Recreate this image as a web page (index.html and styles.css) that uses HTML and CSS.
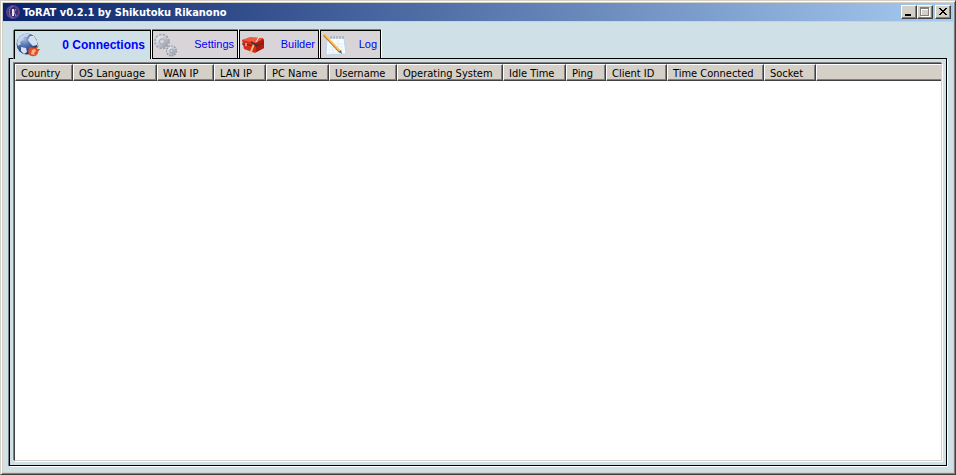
FILE: index.html
```html
<!DOCTYPE html>
<html lang="en">
<head>
<meta charset="utf-8">
<title>ToRAT v0.2.1 by Shikutoku Rikanono</title>
<link rel="stylesheet" href="styles.css">
</head>
<body>
<div class="window">
  <header class="titlebar">
    <svg class="app-icon" viewBox="0 0 16 16" aria-hidden="true">
      <circle cx="8" cy="8" r="7" fill="#57418f"/>
      <circle cx="8" cy="8" r="5" fill="#3d2d70"/>
      <path d="M8 2C3 4 3 12 8 14" fill="none" stroke="#8a78bc"/>
      <path d="M7 5h2v7H7z" fill="#e8e4f4"/>
      <path d="M11 5L9 8l2 4" fill="none" stroke="#a398c4"/>
    </svg>
    <h1 class="title">ToRAT v0.2.1 by Shikutoku Rikanono</h1>
    <div class="controls">
      <button class="control" type="button" aria-label="Minimize"><svg viewBox="0 0 12 10" shape-rendering="crispEdges"><path d="M2 7h6v2H2z"/></svg></button>
      <button class="control" type="button" aria-label="Maximize" disabled><svg viewBox="0 0 12 10" shape-rendering="crispEdges"><path d="M2 1h9v9H2zM3 3v6h7V3z" fill="#fff" fill-rule="evenodd"/><path d="M1 0h9v9H1zM2 2v6h7V2z" fill="#808080" fill-rule="evenodd"/></svg></button>
      <button class="control close" type="button" aria-label="Close"><svg viewBox="0 0 12 10" shape-rendering="crispEdges"><path d="M2 1h2v1h1v1h2V2h1V1h2v1H9v1H8v1H7v1h1v1h1v1h1v1H8V7H7V6H5v1H4v1H2V7h1V6h1V5h1V4H4V3H3V2H2z"/></svg></button>
    </div>
  </header>
  <main class="client">
    <div class="tabs" role="tablist">
      <button class="tab active" type="button" role="tab" aria-selected="true">
        <svg viewBox="0 0 24 24" aria-hidden="true">
          <defs><radialGradient id="sea" cx=".35" cy=".25" r=".8"><stop offset="0" stop-color="#a9c0e6"/><stop offset=".45" stop-color="#4d6ea9"/><stop offset="1" stop-color="#142c60"/></radialGradient></defs>
          <circle cx="11" cy="11" r="10.5" fill="url(#sea)"/>
          <path d="M2 6C5 1 10 0 14 1l-3 3-3 0-1 3-3 2 1 2-3 2-1-3z" fill="#c5d4ec"/>
          <path d="M14 3l4 0 3 5 0 4-4 1-3-3-2-3zM5 14l5 1 1 4-3 2-3-3z" fill="#d4dff0"/>
          <path d="M14 14c2 1 3 0 5 1l4-3-2 4 3 0-2 3c0 3-3 5-6 4-4 0-5-5-2-9z" fill="#dd5128"/>
          <path d="M16 17l3-1 1 2-2 2 1 2-4-1z" fill="#ffb38c"/>
        </svg>
        <span>0 Connections</span>
      </button>
      <button class="tab settings" type="button" role="tab" aria-selected="false">
        <svg viewBox="0 0 24 24" aria-hidden="true">
          <defs><linearGradient id="steel" x2="1" y2="1"><stop offset="0" stop-color="#e6e9ef"/><stop offset="1" stop-color="#9da2ae"/></linearGradient></defs>
          <g fill="none">
            <circle cx="8" cy="8.5" r="6.5" stroke="#9da2ad" stroke-width="2.6" stroke-dasharray="2.1 1.3"/>
            <circle cx="8" cy="8.5" r="4.5" stroke="url(#steel)" stroke-width="3.6"/>
            <circle cx="8" cy="8.5" r="2.6" stroke="#9096a3" stroke-width=".7"/>
            <circle cx="17.5" cy="18" r="4.6" stroke="#8f95a2" stroke-width="2" stroke-dasharray="1.6 1"/>
            <circle cx="17.5" cy="18" r="3.1" stroke="url(#steel)" stroke-width="2.6"/>
            <circle cx="17.5" cy="18" r="1.7" stroke="#858c99" stroke-width=".7"/>
          </g>
        </svg>
        <span>Settings</span>
      </button>
      <button class="tab builder" type="button" role="tab" aria-selected="false">
        <svg viewBox="0 0 24 24" aria-hidden="true">
          <path d="M1 7l8-2 13 0 1 10-9 5-11-4z" fill="#d42d1b"/>
          <path d="M1 7l8-3 13 1-7 5z" fill="#ed5c40"/>
          <path d="M15 10l8-4 0 9-8 4z" fill="#a91d12"/>
          <path d="M1 11l14 2 8-3" fill="none" stroke="#851a10"/>
          <path d="M13 11L9 21" stroke="#efc379" stroke-width="2"/>
          <path d="M10 8l7 4-1 2-6-4z" fill="#433"/>
          <path d="M15 9l3-5" stroke="#eee"/>
          <path d="M5 10v3" stroke="#fff"/>
        </svg>
        <span>Builder</span>
      </button>
      <button class="tab log" type="button" role="tab" aria-selected="false">
        <svg viewBox="0 0 24 24" aria-hidden="true">
          <path d="M5 5l17 0 2 16-20 1z" fill="#f8fcff" stroke="#b9d4e5"/>
          <path d="M7 11h14M7 14h14M6 17h16M6 20h16M11 7v14M16 7v14" stroke="#deedf6"/>
          <path d="M9 3v3m3-3v3m3-3v3m3-3v3m3-3v3" stroke="#999fa7"/>
          <path d="M2 2l16 17" stroke="#b7762a" stroke-width="2.4"/>
          <path d="M2 1l16 17" stroke="#ffc354" stroke-width="1.7"/>
          <path d="M17 19l3 2-1-4z" fill="#665344"/>
        </svg>
        <span>Log</span>
      </button>
    </div>
    <section class="panel" role="tabpanel">
      <div class="list">
        <table>
          <colgroup><col class="c58"><col class="c84"><col class="c57"><col class="c52"><col class="c63"><col class="c68"><col class="c106"><col class="c63"><col class="c40"><col class="c61"><col class="c97"><col class="c52"><col></colgroup>
          <thead><tr><th>Country</th><th>OS Language</th><th>WAN IP</th><th>LAN IP</th><th>PC Name</th><th>Username</th><th>Operating System</th><th>Idle Time</th><th>Ping</th><th>Client ID</th><th>Time Connected</th><th>Socket</th><td class="filler"></td></tr></thead>
        </table>
      </div>
    </section>
  </main>
</div>
</body>
</html>
```
FILE: styles.css
```css
* { box-sizing: border-box; }
body {
  margin: 0;
  font: 11px/13px "DejaVu Sans Condensed", "DejaVu Sans", sans-serif;
}
.window {
  display: flex;
  flex-direction: column;
  min-height: 100vh;
  padding: 1px;
  background: #cfe0e7;
  border: 1px solid;
  border-color: #d4d0c8 #404040 #404040 #d4d0c8;
  box-shadow: inset 1px 1px #fff, inset -1px -1px #808080, inset 2px 2px #d4d0c8, inset -2px -2px #d4d0c8;
}
.titlebar {
  display: flex;
  align-items: center;
  height: 18px;
  margin: 1px 1px 0;
  padding: 0 2px;
  background: linear-gradient(90deg, #0a246a, #a6caf0);
  box-shadow: 0 1px #d4d0c8;
}
.app-icon { width: 16px; height: 16px; }
.title {
  flex: 1;
  margin: 0 0 0 2px;
  color: #fff;
  font-size: 11px;
  font-weight: bold;
}
.controls { display: flex; }
.control {
  display: flex;
  width: 16px;
  height: 14px;
  padding: 1px;
  background: #d4d0c8;
  border: 1px solid;
  border-color: #fff #404040 #404040 #fff;
  box-shadow: inset -1px -1px #808080;
}
.control svg { width: 12px; height: 10px; }
.close { margin-left: 2px; }
.client {
  display: flex;
  flex: 1;
  flex-direction: column;
  padding: 9px 7px 7px;
}
.tabs {
  display: flex;
  gap: 1px;
  padding-left: 5px;
}
.tab {
  display: flex;
  align-items: center;
  justify-content: space-between;
  height: 28px;
  padding: 0 3px 0 1px;
  background: #d8d4d8;
  border: 1px solid #000;
  border-width: 1px 1px 0;
  box-shadow: 0 -1px #808080, 1px 0 #fff;
  color: #00f;
  font: 11px/13px "Liberation Sans", Arial, sans-serif;
}
.tab svg { width: 24px; height: 24px; }
.active {
  position: relative;
  width: 137px;
  height: 29px;
  margin-bottom: -1px;
  padding-right: 5px;
  background: #cfe0e7;
  box-shadow: 0 -1px #808080, -1px 0 #808080, 1px 0 #fff;
  font-size: 12px;
  font-weight: bold;
}
.settings { width: 86px; }
.builder { width: 80px; }
.log { width: 61px; }
.panel {
  display: flex;
  flex: 1;
  padding: 4px;
  border: 1px solid #000;
  box-shadow: -1px 0 #808080, 1px 1px #fff;
}
.list {
  flex: 1;
  background: #fff;
  border: 1px solid;
  border-color: #404040 #d4d0c8 #d4d0c8 #404040;
  box-shadow: -1px -1px #808080, 1px 1px #fff;
}
table {
  width: 100%;
  border-collapse: separate;
  border-spacing: 0;
  table-layout: fixed;
}
th, .filler {
  height: 17px;
  padding: 1px 0 0 5px;
  background: #d4d0c8;
  border: 1px solid;
  border-color: #fff #404040 #404040 #fff;
  box-shadow: inset -1px -1px #808080;
  font-weight: normal;
  text-align: left;
  white-space: nowrap;
}
.filler { border-right: 0; box-shadow: inset 0 -1px #808080; }
.c40 { width: 40px; }
.c52 { width: 52px; }
.c57 { width: 57px; }
.c58 { width: 58px; }
.c61 { width: 61px; }
.c63 { width: 63px; }
.c68 { width: 68px; }
.c84 { width: 84px; }
.c97 { width: 97px; }
.c106 { width: 106px; }
```
